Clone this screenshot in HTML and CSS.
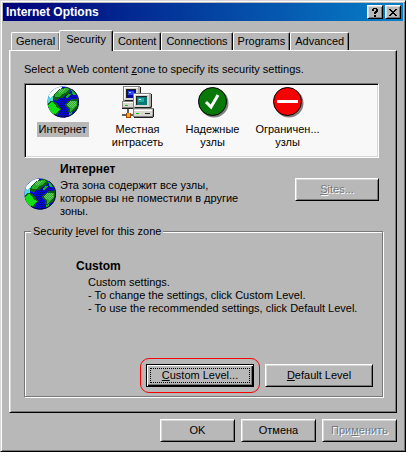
FILE: index.html
```html
<!DOCTYPE html>
<html lang="ru">
<head>
  <meta charset="UTF-8">
  <meta name="viewport" content="width=device-width, initial-scale=1.0">
  <title>Internet Options</title>
  <link rel="stylesheet" href="styles.css">
</head>
<body>

  <!-- Shared globe icon -->
  <svg class="sprites" aria-hidden="true">
    <defs>
      <clipPath id="disc"><circle cx="16" cy="16" r="15.5"/></clipPath>
      <pattern id="dither" width="2" height="2" patternUnits="userSpaceOnUse">
        <path fill="#080880" d="M0 0h1v1H0zM1 1h1v1H1z"/>
      </pattern>
      <pattern id="leaf" width="2" height="2" patternUnits="userSpaceOnUse">
        <path fill="#70c870" d="M0 0h1v1H0zM1 1h1v1H1z"/>
      </pattern>
      <symbol id="globe" viewBox="0 0 32 32">
        <g clip-path="url(#disc)" shape-rendering="crispEdges">
          <rect width="32" height="32" fill="#0808e0"/>
          <path fill="url(#dither)" d="M13 11l5-3 6 5-6 4v6l5 4-5 5-5-2-1-8zM24 8l6 4-6 1z"/>
          <path fill="#50d8e0" d="M0 14l2-6 5-4 3 3-4 5v5l-3 2H0z"/>
          <path fill="#f0ffff" d="M2 9l4-5 5-3h4v2l-5 2-4 4-3 3z"/>
          <path fill="#086010" d="M7 8l5-5 8-2 4 2-2 5-4 1-2 3-4 0-2 3-4-2z"/>
          <path fill="#28b028" d="M8 8l5-5 7-1 2 1-3 4-4 1-3 3-4 0z"/>
          <path fill="url(#leaf)" d="M10 6l4-3h4l-2 3-4 2z"/>
          <path fill="#086010" d="M0 18l4-3 5 1 3 4 2 3-3 5-2 3-5-2-4-7z"/>
          <path fill="#10e010" d="M1 19l4-3 3 2 2 4 3 1-3 3-1 3-4-1-3-5z"/>
          <path fill="#086010" d="M18 18l4-3 2-2 4 0 3-1v9l-4 4-4 3-2-2 1-3-4-3z"/>
          <path fill="#28b028" d="M20 18l4-3h6v5l-4 3-3 3 0-4-3-2z"/>
          <path fill="url(#leaf)" d="M20 18l4-3h5v4l-4 3-5-2z"/>
          <path fill="#10b810" d="M18 11l3-3 3 0-2 3-3 1zM24 4l3 1 2 4-3 0zM22 27l3-1v3l-3 1z"/>
        </g>
        <path fill="none" stroke="#000038" d="M25 3.500a15 15 0 0 1-3 26.500Q14 33 7 28"/>
      </symbol>
    </defs>
  </svg>

  <main class="window">
    <header class="titlebar">
      <h1>Internet Options</h1>
      <button class="btn caption" type="button" aria-label="Help">
        <svg viewBox="0 0 8 9" width="8" height="9" shape-rendering="crispEdges"><path d="M1 1h1V0h4v1h1v3H6v1H5v1H3V4h1V3h1V1H3v2H1zM3 7h2v2H3z"/></svg>
      </button>
      <button class="btn caption" type="button" aria-label="Close">
        <svg viewBox="0 0 8 7" width="8" height="7" shape-rendering="crispEdges"><path d="M0 0h2v1h1v1h2V1h1V0h2v1H7v1H6v1H5v1h1v1h1v1h1v1H6V6H5V5H3v1H2v1H0V6h1V5h1V4h1V3H2V2H1V1H0z"/></svg>
      </button>
    </header>

    <!-- Tabs -->
    <div class="tabs" role="tablist">
      <button class="tab" type="button" role="tab">General</button>
      <button class="tab active" type="button" role="tab" aria-selected="true">Security</button>
      <button class="tab" type="button" role="tab">Content</button>
      <button class="tab" type="button" role="tab">Connections</button>
      <button class="tab" type="button" role="tab">Programs</button>
      <button class="tab" type="button" role="tab">Advanced</button>
    </div>

    <section class="panel" role="tabpanel">
      <p class="prompt">Select a Web content <u>z</u>one to specify its security settings.</p>

      <div class="zones">
        <button class="zone selected" type="button">
          <svg width="32" height="32"><use href="#globe"/></svg>
          <span>Интернет</span>
        </button>
        <button class="zone" type="button">
          <svg width="32" height="32" viewBox="0 0 32 32" shape-rendering="crispEdges">
            <path fill="#808080" d="M1 0h16l2 1v13l-2 1H1zM0 15h16v8H0z"/>
            <path fill="#d8d8d0" d="M2 1h14v13H2zM1 16h14v5H1z"/>
            <path fill="#b0b0a8" d="M16 1h2v12l-2 1z"/>
            <path fill="#fff" d="M2 1h14v1H3v11H2zM1 16h11v1H1z"/>
            <path fill="#202020" d="M18 1h1v7h-1zM3 14h8v1H3zM0 22h11v1H0zM4 3h10v1H5v8H4z"/>
            <path fill="#0808a0" d="M5 4h9v8H5z"/>
            <path fill="#2848f0" d="M6 5h6v4H6z"/>
            <path fill="#b0d0ff" d="M7 6h2v1H7z"/>
            <path fill="#10c010" d="M3 19h3v1H3z"/>
            <path fill="#808080" d="M11 7h17l2 1v14h2v9H11v-9z"/>
            <path fill="#d8d8d0" d="M12 8h15v13H12zM12 23h18v7H12z"/>
            <path fill="#b0b0a8" d="M27 8h2v12l-2 1zM30 23h1v6h-1z"/>
            <path fill="#fff" d="M12 8h15v1H13v11h-1zM12 24h18v1H12z"/>
            <path fill="#202020" d="M29 8h1v13h-1zM13 21h16v1H13zM12 31h19v1H12zM31 23h1v8h-1zM14 10h11v1H15v8h-1z"/>
            <path fill="#087878" d="M15 11h10v8H15z"/>
            <path fill="#28a8a0" d="M16 12h6v4h-6z"/>
            <path fill="#c0ffff" d="M17 13h2v1h-2z"/>
            <path fill="#10c010" d="M14 27h3v1h-3z"/>
            <path fill="#202020" d="M23 27h5v1h-5z"/>
            <path fill="#606060" d="M5 23h2v4H5zM0 28h4v2H0zM8 28h3v2H8z"/>
            <path fill="#a04800" d="M4 27h5v5H4z"/>
            <path fill="#f8a020" d="M5 27h3v4H5z"/>
          </svg>
          <span>Местная интрасеть</span>
        </button>
        <button class="zone" type="button">
          <svg width="32" height="32" viewBox="0 0 32 32">
            <circle cx="17" cy="17" r="14.5" fill="#808080"/>
            <circle cx="15.500" cy="15.500" r="14" fill="#087808" stroke="#000"/>
            <path fill="none" stroke="#fff" stroke-width="3" d="M9 16l5 5 7-12"/>
          </svg>
          <span>Надежные узлы</span>
        </button>
        <button class="zone" type="button">
          <svg width="32" height="32" viewBox="0 0 32 32">
            <circle cx="17" cy="17" r="14.5" fill="#808080"/>
            <circle cx="15.500" cy="15.500" r="14" fill="#f80000" stroke="#000"/>
            <path fill="#fff" d="M5 14h21v3H5z"/>
          </svg>
          <span>Ограничен... узлы</span>
        </button>
      </div>

      <!-- Selected zone -->
      <div class="details">
        <svg class="details-icon" width="32" height="32"><use href="#globe"/></svg>
        <div class="details-text">
          <h2>Интернет</h2>
          <p>Эта зона содержит все узлы,<br>которые вы не поместили в другие<br>зоны.</p>
        </div>
        <button class="btn sites" type="button" disabled><u>S</u>ites...</button>
      </div>

      <fieldset class="level">
        <legend>Security <u>l</u>evel for this zone</legend>
        <h2>Custom</h2>
        <div class="level-text">
          <p>Custom settings.</p>
          <p>- To change the settings, click Custom Level.</p>
          <p>- To use the recommended settings, click Default Level.</p>
        </div>
        <div class="level-buttons">
          <div class="marker">
            <button class="btn default" type="button"><u>C</u>ustom Level...</button>
          </div>
          <button class="btn" type="button"><u>D</u>efault Level</button>
        </div>
      </fieldset>
    </section>

    <footer class="actions">
      <button class="btn" type="button">OK</button>
      <button class="btn" type="button">Отмена</button>
      <button class="btn" type="button" disabled>При<u>м</u>енить</button>
    </footer>
  </main>

</body>
</html>
```
FILE: styles.css
```css
* {
  box-sizing: border-box;
}

body {
  margin: 0;
  background-color: #b8b8b8;
  color: #000;
  font-family: "Liberation Sans", Arial, sans-serif;
  font-size: 11px;
  line-height: 13px;
}

h1, h2, p {
  margin: 0;
}

button {
  font: inherit;
  color: inherit;
  padding: 0;
}

.sprites {
  position: absolute;
  width: 0;
  height: 0;
}

.window {
  min-height: 100vh;
  padding: 1px;
  border: 1px solid;
  border-color: #d8d8d8 #000 #000 #d8d8d8;
  box-shadow: inset 1px 1px #fff, inset -1px -1px #787878;
}

/* Title bar */
.titlebar {
  display: flex;
  align-items: center;
  gap: 2px;
  height: 18px;
  margin: 1px;
  padding: 0 2px 0 3px;
  background: linear-gradient(to right, #000078, #0880c8);
  color: #fff;
}

.titlebar h1 {
  flex: 1;
  font-size: 12px;
}

/* Buttons */
.btn {
  height: 23px;
  background-color: #b8b8b8;
  border: 1px solid;
  border-color: #fff #000 #000 #fff;
  box-shadow: inset 1px 1px #d8d8d8, inset -1px -1px #787878;
}

.btn:disabled {
  color: #787878;
  text-shadow: 1px 1px #fff;
}

.btn.caption {
  display: flex;
  align-items: center;
  justify-content: center;
  width: 16px;
  height: 14px;
  color: #000;
}

.btn.default {
  border-color: #000;
  box-shadow: inset 1px 1px #fff, inset -1px -1px #000, inset -2px -2px #787878;
  outline: 1px dotted #000;
  outline-offset: -5px;
}

/* Tabs */
.tabs {
  display: flex;
  align-items: flex-end;
  height: 28px;
  padding: 0 9px;
}

.tab {
  height: 18px;
  padding: 0 4px;
  background-color: #b8b8b8;
  border: 1px solid;
  border-color: #fff #000 transparent #fff;
  border-bottom: 0;
  border-radius: 2px 2px 0 0;
  box-shadow: inset -1px 0 #787878;
}

.tab.active {
  position: relative;
  height: 21px;
  margin: 0 0 -1px -1px;
  padding: 0 6px 3px;
}

.panel {
  margin: 0 7px;
  padding: 12px 13px 15px 14px;
  border: 1px solid;
  border-color: #fff #000 #000 #fff;
  box-shadow: inset 1px 0 #d8d8d8, inset -1px -1px #787878;
}

/* Zone list */
.zones {
  display: flex;
  height: 75px;
  margin: 7px 4px 0 0;
  background-color: #f8f8f8;
  border: 1px solid;
  border-color: #787878 #fff #fff #787878;
  box-shadow: inset 1px 1px #000, inset -1px -1px #d8d8d8;
}

.zone {
  display: flex;
  flex-direction: column;
  align-items: center;
  gap: 5px;
  width: 75px;
  padding-top: 2px;
  background: none;
  border: 0;
}

.zone svg, .details-icon {
  flex: none;
}

.zone.selected {
  gap: 4px;
}

.zone.selected span {
  padding: 1px 2px;
  background-color: #b8b8b8;
}

/* Selected zone */
.details {
  display: flex;
  margin: 3px 4px 0 0;
}

.details-icon {
  margin-top: 17px;
}

.details-text {
  flex: 1;
  padding-left: 4px;
}

h2 {
  margin-bottom: 2px;
  font-size: 12px;
  line-height: 16px;
}

.btn.sites {
  width: 84px;
  margin-top: 17px;
}

/* Security level */
.level {
  margin: 7px 0 0;
  padding: 20px 9px 3px 51px;
  border: 1px solid #787878;
  box-shadow: 1px 1px #fff, inset 1px 1px #fff;
}

.level legend {
  margin-left: -45px;
  padding: 0 2px;
  background-color: #b8b8b8;
}

.level-text {
  padding-left: 12px;
}

.level-buttons {
  display: flex;
  justify-content: flex-end;
  align-items: center;
  gap: 5px;
  margin-top: 43px;
}

.level-buttons .btn {
  width: 108px;
}

.marker {
  padding: 5px;
  border: 1px solid #f80000;
  border-radius: 9px;
}

/* Bottom buttons */
.actions {
  display: flex;
  justify-content: flex-end;
  gap: 6px;
  padding: 6px 7px 7px;
}

.actions .btn {
  width: 75px;
}
```
